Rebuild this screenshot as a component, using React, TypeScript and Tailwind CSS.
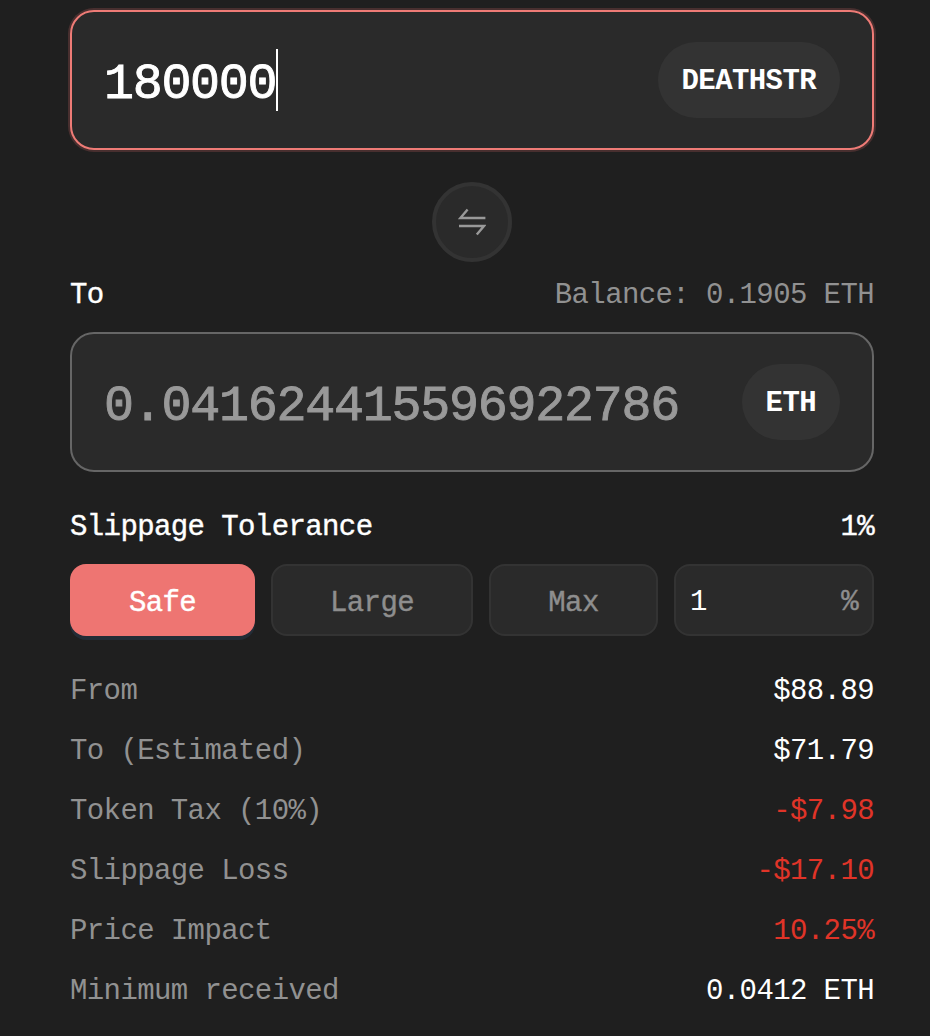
import React from 'react';

const presets = [
  { label: 'Safe', className: 'w-[185px] bg-[#ee7572] text-white shadow-[0_4px_0_#232c36]' },
  { label: 'Large', className: 'w-[202px] bg-[#2a2a2a] border-2 border-[#333333] text-[#8e8e8e]' },
  { label: 'Max', className: 'w-[169px] bg-[#2a2a2a] border-2 border-[#333333] text-[#8e8e8e]' },
];

const details = [
  { label: 'From', value: '$88.89', color: 'text-white' },
  { label: 'To (Estimated)', value: '$71.79', color: 'text-white' },
  { label: 'Token Tax (10%)', value: '-$7.98', color: 'text-[#e03428]' },
  { label: 'Slippage Loss', value: '-$17.10', color: 'text-[#e03428]' },
  { label: 'Price Impact', value: '10.25%', color: 'text-[#e03428]' },
  { label: 'Minimum received', value: '0.0412 ETH', color: 'text-white' },
];

const TokenPill: React.FC<{ symbol: string }> = ({ symbol }) => (
  <div className="h-[76px] px-6 rounded-full bg-[#333333] text-white font-bold flex items-center">
    <span className="pt-1">{symbol}</span>
  </div>
);

const SwapIcon: React.FC = () => (
  <svg width="28" height="28" viewBox="0 0 28 28" fill="none" stroke="#999999" strokeWidth="2.4">
    <path d="M27.4 10H2.4L9.6 1.4" />
    <path d="M1 18h25l-7.2 8.6" />
  </svg>
);

const App: React.FC = () => {
  return (
    <div className="w-[930px] h-[1036px] overflow-hidden bg-[#1f1f1f] pt-2.5 pl-[70px] pr-14 font-['Liberation_Mono',monospace] text-[29px] tracking-[-0.6px] leading-9">
      <div className="h-[140px] px-8 flex items-center justify-between rounded-3xl border-2 border-[#ee7b76] bg-[#2a2a2a] shadow-[0_0_0_2px_rgba(238,117,114,0.2)]">
        <div className="flex items-center text-white text-[50px] tracking-[-1.3px] [-webkit-text-stroke:0.9px]">
          <span className="pt-2.5">180000</span>
          <span className="w-0.5 h-[62px] bg-white" />
        </div>
        <TokenPill symbol="DEATHSTR" />
      </div>

      <div className="mt-8 mx-auto size-20 rounded-full border-4 border-[#333333] bg-[#2a2a2a] flex items-center justify-center">
        <SwapIcon />
      </div>

      <div className="mt-4 flex justify-between">
        <span className="text-white [-webkit-text-stroke:0.4px]">To</span>
        <span className="text-[#919191]">Balance: 0.1905 ETH</span>
      </div>

      <div className="mt-[18px] h-[140px] px-8 flex items-center justify-between rounded-3xl border-2 border-[#666666] bg-[#2a2a2a]">
        <span className="pt-2.5 text-[#999999] text-[50px] tracking-[-1.25px] [-webkit-text-stroke:0.9px]">0.041624415596922786</span>
        <TokenPill symbol="ETH" />
      </div>

      <div className="mt-[38px] flex justify-between text-white [-webkit-text-stroke:0.4px]">
        <span>Slippage Tolerance</span>
        <span>1%</span>
      </div>

      <div className="mt-[18px] flex gap-4 h-[72px]">
        {presets.map((p) => (
          <button key={p.label} className={`pt-[7px] rounded-2xl flex items-center justify-center [-webkit-text-stroke:0.4px] ${p.className}`}>
            {p.label}
          </button>
        ))}
        <div className="w-[200px] pt-[5px] px-3.5 flex items-center justify-between rounded-2xl border-2 border-[#333333] bg-[#2a2a2a]">
          <span className="text-white">1</span>
          <span className="text-[#8e8e8e] [-webkit-text-stroke:0.4px]">%</span>
        </div>
      </div>

      <div className="mt-[38px] flex flex-col gap-6">
        {details.map((d) => (
          <div key={d.label} className="flex justify-between">
            <span className="text-[#919191]">{d.label}</span>
            <span className={d.color}>{d.value}</span>
          </div>
        ))}
      </div>
    </div>
  );
};

export default App;
